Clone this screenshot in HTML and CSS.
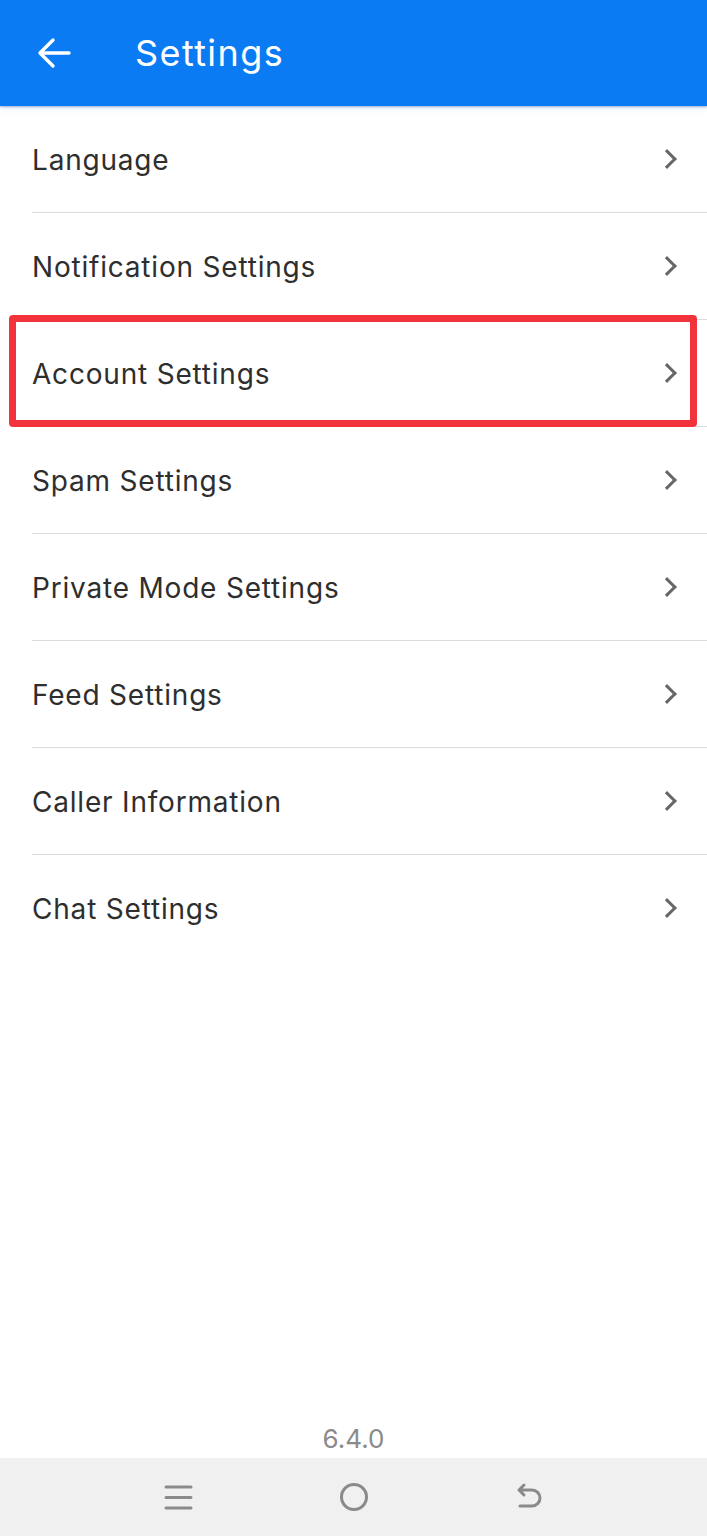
FILE: index.html
```html
<!DOCTYPE html>
<html lang="en">
    <head>
        <meta charset="utf-8">
        <meta name="viewport" content="width=device-width, initial-scale=1" />
        <title>Settings</title>
        <link rel="stylesheet" href="styles.css">
    </head>
    <body>
        <div class="screen">
            <header class="topbar">
                <svg class="back" width="34" height="32" viewBox="0 0 34 32">
                    <path d="M32 16H3M16 3L3 16l13 13" fill="none" stroke="#fff" stroke-width="3.4" stroke-linecap="round" stroke-linejoin="round"/>
                </svg>
                <h1>Settings</h1>
            </header>

            <ul class="menu">
                <li class="row"><span>Language</span><i class="chev"></i></li>
                <li class="row"><span>Notification Settings</span><i class="chev"></i></li>
                <li class="row marked"><span>Account Settings</span><i class="chev"></i></li>
                <li class="row"><span>Spam Settings</span><i class="chev"></i></li>
                <li class="row"><span>Private Mode Settings</span><i class="chev"></i></li>
                <li class="row"><span>Feed Settings</span><i class="chev"></i></li>
                <li class="row"><span>Caller Information</span><i class="chev"></i></li>
                <li class="row last"><span>Chat Settings</span><i class="chev"></i></li>
            </ul>

            <p class="version">6.4.0</p>

            <nav class="navbar">
                <svg width="30" height="30" viewBox="0 0 30 30">
                    <path d="M3 5h25M3 15.5h25M3 26h25" stroke="#8a8a8a" stroke-width="3" stroke-linecap="round"/>
                </svg>
                <svg width="30" height="30" viewBox="0 0 30 30">
                    <circle cx="15" cy="15" r="12.5" fill="none" stroke="#8a8a8a" stroke-width="3"/>
                </svg>
                <svg width="30" height="30" viewBox="0 0 30 30">
                    <path d="M9 3L4 8l5 5M4 8h13a8 8 0 0 1 0 16H5" fill="none" stroke="#8a8a8a" stroke-width="3" stroke-linecap="round" stroke-linejoin="round"/>
                </svg>
            </nav>
        </div>
    </body>
</html>
```

FILE: styles.css
```css
body {
    margin: 0;
    background: #fff;
    font-family: Inter, "Noto Sans", sans-serif;
    color: #2e2e2e;
}
.screen {
    height: 1536px;
    display: flex;
    flex-direction: column;
}
.topbar {
    height: 106px;
    background: #0a7bf3;
    display: flex;
    align-items: center;
    padding-left: 37px;
    gap: 64px;
    box-shadow: 0 1px 2px rgba(0, 40, 120, 0.35), 0 4px 6px rgba(10, 123, 243, 0.08);
    position: relative;
}
.topbar h1 {
    margin: 0;
    color: #fff;
    font-size: 36px;
    font-weight: 400;
    letter-spacing: 1.4px;
}
.menu {
    list-style: none;
    margin: 0;
    padding: 0;
}
.row {
    height: 106px;
    margin-left: 32px;
    padding-right: 31px;
    border-bottom: 1px solid #dcdcdc;
    display: flex;
    align-items: center;
    justify-content: space-between;
    font-size: 28px;
    letter-spacing: 0.8px;
    position: relative;
}
.row span { padding-top: 2px; }
.row.last { border-bottom: none; }
.chev {
    width: 11px;
    height: 11px;
    border-top: 3px solid #666;
    border-right: 3px solid #666;
    transform: rotate(45deg);
    margin-right: 2px;
}
.marked::after {
    content: "";
    position: absolute;
    left: -23px;
    right: 10px;
    top: -5px;
    bottom: -1px;
    border: 7px solid #f2333b;
    border-radius: 4px;
}
.version {
    margin: auto 0 4px;
    text-align: center;
    color: #8a8a8a;
    font-size: 26px;
}
.navbar {
    height: 78px;
    background: #f0f0f0;
    display: flex;
    justify-content: center;
    align-items: center;
    gap: 146px;
}
```
